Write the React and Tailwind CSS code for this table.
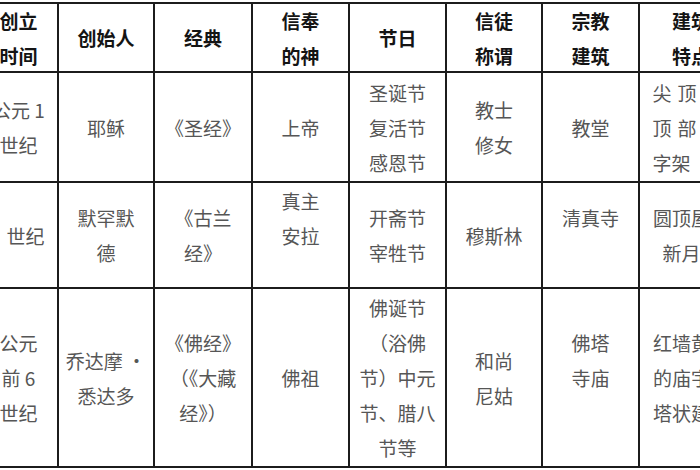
const widths = ['w-[79px]', 'w-[96px]', 'w-[98px]', 'w-[97px]', 'w-[97px]', 'w-[96px]', 'w-[97px]', 'w-[104px]'];

const header = [
  ['创立', '时间'],
  ['创始人'],
  ['经典'],
  ['信奉', '的神'],
  ['节日'],
  ['信徒', '称谓'],
  ['宗教', '建筑'],
  ['建筑', '特点'],
];

// each cell: list of lines ('' = blank line for spacing), optional extra classes
const rows = [
  {
    h: 'h-[110px]',
    cells: [
      [['公元 1', '世纪']],
      [['耶稣']],
      [['《圣经》']],
      [['上帝']],
      [['圣诞节', '复活节', '感恩节']],
      [['教士', '修女']],
      [['教堂']],
      [['尖顶，', '顶部十', '字架'], 'last1'],
    ],
  },
  {
    h: 'h-[106px]',
    cells: [
      [['世纪'], 'ml-[14px]'],
      [['默罕默', '德']],
      [['《古兰', '经》']],
      [['真主', '安拉', '']],
      [['开斋节', '宰牲节']],
      [['穆斯林']],
      [['清真寺', '']],
      [['圆顶屋顶', '新月形']],
    ],
  },
  {
    h: 'h-[179px]',
    cells: [
      [['公元', '前 6', '世纪']],
      [['乔达摩 ·', '悉达多']],
      [['《佛经》', '（《大藏', '经》）']],
      [['佛祖']],
      [['佛诞节', '（浴佛', '节）中元', '节、腊八', '节等']],
      [['和尚', '尼姑']],
      [['佛塔', '寺庙', '']],
      [['红墙黄瓦', '的庙宇，', '塔状建筑']],
    ],
  },
];

function Cell({ w, lines, extra, bold }) {
  const justified = extra === 'last1';
  return (
    <div className={`${w} shrink-0 h-full border-r-2 border-[#1c1c1c] flex flex-col items-center justify-center`}>
      <div className={`flex flex-col ${justified ? 'items-start ml-[-2px]' : 'items-center ' + (extra || '')}`}>
        {lines.map((t, i) => (
          <div
            key={i}
            className={`leading-[35px] whitespace-nowrap ${bold ? 'font-bold text-[#141414]' : 'text-[#565656]'} ${
              justified && i < 2 ? 'tracking-[6px]' : ''
            }`}
          >
            {t || '\u00a0'}
          </div>
        ))}
      </div>
    </div>
  );
}

export default function App() {
  return (
    <div
      className="w-[700px] h-[470px] overflow-hidden bg-white text-[19px]"
      style={{ fontFamily: '"Noto Sans CJK SC", "Noto Sans", sans-serif' }}
    >
      <div className="mt-[2px] -ml-[20px] w-[800px] border-t-2 border-[#1c1c1c]">
        <div className="flex h-[69px] border-b-2 border-[#1c1c1c]">
          {header.map((lines, i) => (
            <Cell key={i} w={widths[i]} lines={lines} bold />
          ))}
        </div>
        {rows.map((row, r) => (
          <div key={r} className={`flex ${row.h} border-b-2 border-[#1c1c1c]`}>
            {row.cells.map(([lines, extra], i) => (
              <Cell key={i} w={widths[i]} lines={lines} extra={extra} />
            ))}
          </div>
        ))}
      </div>
    </div>
  );
}
